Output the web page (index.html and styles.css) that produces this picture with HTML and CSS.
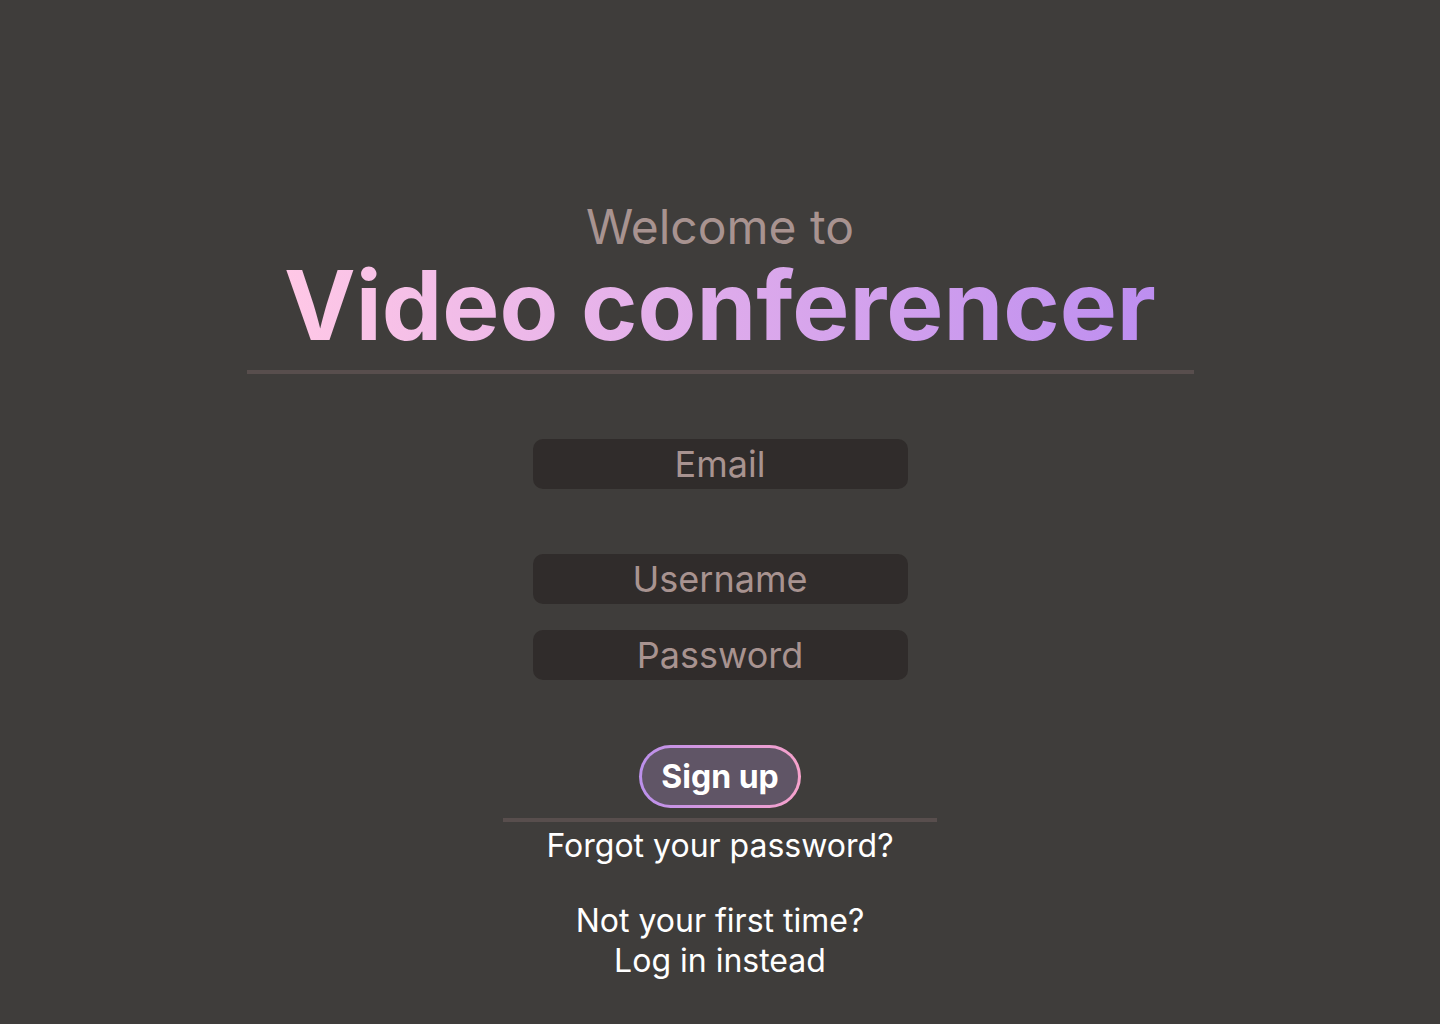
FILE: index.html
```html
<!DOCTYPE html>
<html lang="en">
<head>
<meta charset="utf-8">
<title>Video conferencer</title>
<link rel="stylesheet" href="styles.css">
</head>
<body>
<main class="page">
  <header class="hero">
    <p class="welcome">Welcome to</p>
    <h1 class="title">Video conferencer</h1>
  </header>
  <hr class="rule rule-wide">
  <form class="form">
    <input class="field field-email" type="email" placeholder="Email">
    <input class="field field-user" type="text" placeholder="Username">
    <input class="field field-pass" type="password" placeholder="Password">
    <button class="signup" type="button"><span class="signup-inner">Sign up</span></button>
  </form>
  <hr class="rule rule-narrow">
  <p class="link forgot">Forgot your password?</p>
  <p class="link login">Not your first time?<br>Log in instead</p>
</main>
</body>
</html>
```
FILE: styles.css
```css
* { box-sizing: border-box; }
html, body { margin: 0; padding: 0; }
body {
  background: #3f3d3b;
  font-family: Inter, "Noto Sans", sans-serif;
  width: 1440px;
  height: 1024px;
  overflow: hidden;
}
.page {
  display: flex;
  flex-direction: column;
  align-items: center;
  padding-top: 198px;
}
.hero { display: flex; flex-direction: column; align-items: center; }
.welcome {
  margin: 0;
  font-size: 48px;
  line-height: 58px;
  color: #a89390;
  font-weight: 400;
}
.title {
  margin: 0 0 16px;
  font-size: 96px;
  line-height: 98px;
  font-weight: 700;
  background: linear-gradient(90deg, #ffc8e6 0%, #bd8ef0 100%);
  -webkit-background-clip: text;
  background-clip: text;
  color: transparent;
}
.rule {
  border: none;
  margin: 0;
  background: #584e4d;
  height: 4px;
}
.rule-wide { width: 947px; }
.form {
  display: flex;
  flex-direction: column;
  align-items: center;
  margin-top: 65px;
}
.field {
  width: 375px;
  height: 50px;
  border: none;
  border-radius: 10px;
  background: #302c2b;
  color: #a89390;
  font-family: inherit;
  font-size: 36px;
  text-align: center;
  outline: none;
  padding: 0;
}
.field::placeholder { color: #a89390; opacity: 1; }
.field-user { margin-top: 65px; }
.field-pass { margin-top: 26px; }
.signup {
  margin-top: 65px;
  padding: 3px;
  border: none;
  border-radius: 40px;
  background: linear-gradient(90deg, #bb90ec 0%, #f7a2cc 100%);
  cursor: pointer;
}
.signup-inner {
  display: flex;
  align-items: center;
  justify-content: center;
  width: 156px;
  height: 57px;
  border-radius: 40px;
  background: #605566;
  color: #ffffff;
  font-family: Inter, sans-serif;
  font-size: 32px;
  font-weight: 700;
}
.rule-narrow { width: 434px; margin-top: 10px; }
.link {
  margin: 0;
  color: #ffffff;
  font-size: 32px;
  line-height: 40px;
  text-align: center;
}
.forgot { margin-top: 4px; }
.login { margin-top: 35px; }
```
